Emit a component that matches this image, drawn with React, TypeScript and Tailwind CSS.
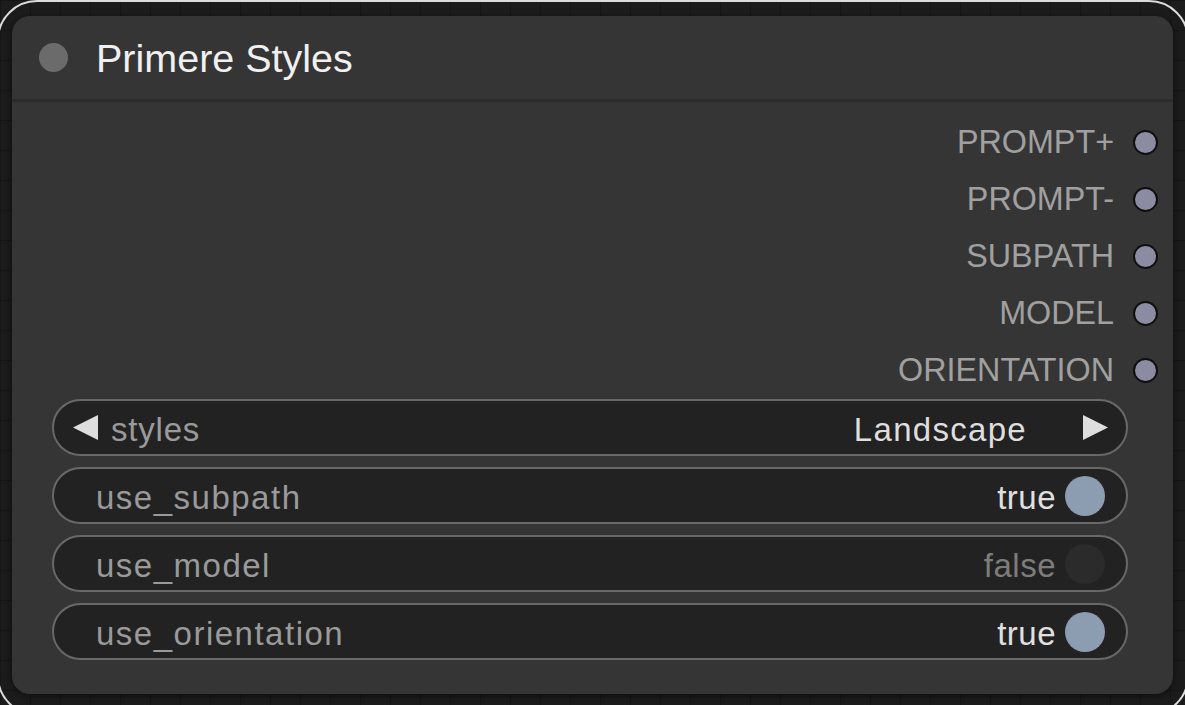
import React from 'react';

const outputs = ['PROMPT+', 'PROMPT-', 'SUBPATH', 'MODEL', 'ORIENTATION'];

const toggles = [
  { name: 'use_subpath', value: true },
  { name: 'use_model', value: false },
  { name: 'use_orientation', value: true },
];

const font = { fontFamily: '"Liberation Sans", Arial, sans-serif' };

const Pill: React.FC<{ children: React.ReactNode }> = ({ children }) => (
  <div className="h-[57px] flex items-center rounded-full border-2 border-[#686868] bg-[#222222]">
    {children}
  </div>
);

export default function App() {
  return (
    <div
      className="relative w-[1185px] h-[705px] overflow-hidden bg-[#1c1c1c] bg-[linear-gradient(#161616_1px,transparent_1px),linear-gradient(90deg,#161616_1px,transparent_1px)] bg-[size:30px_30px] pt-[16px] pl-[12px]"
      style={font}
    >
      {/* selection outline */}
      <div className="pointer-events-none absolute left-[-3px] top-0 w-[1192px] h-[716px] rounded-[40px] border-2 border-[#dcdcdc]" />

      <div className="w-[1161px] h-[678px] rounded-[18px] bg-[#353535] flex flex-col overflow-hidden shadow-[0_2px_8px_rgba(0,0,0,0.5)]">
        <div className="h-[86px] shrink-0 flex items-center border-b-[3px] border-[#2b2b2b]">
          <div className="ml-[27px] w-[29px] h-[29px] rounded-full bg-[#6b6b6b]" />
          <span className="ml-[28px] mt-[2px] text-[39.5px] leading-none text-[#f0f0f0]">Primere Styles</span>
        </div>

        <div className="pt-[12px] flex flex-col">
          {outputs.map((o) => (
            <div key={o} className="h-[57px] flex items-center justify-end pr-[15px] gap-[19px]">
              <span className="text-[32.3px] leading-none text-[#a0a0a0]">{o}</span>
              <div className="w-[25px] h-[25px] rounded-full bg-[#8b8ba2] border-[2.5px] border-[#0f0f0f]" />
            </div>
          ))}
        </div>

        <div className="ml-[40px] mr-[45px] flex flex-col gap-[11px]">
          <Pill>
            <svg width="27" height="27" viewBox="0 0 27 27" className="ml-[18px]">
              <polygon points="26,1 26,26 1,13.5" fill="#dedede" />
            </svg>
            <span className="ml-[12px] mt-[3px] text-[33px] leading-none tracking-[0.8px] text-[#9a9a9a]">styles</span>
            <span className="ml-auto mt-[3px] text-[33px] leading-none tracking-[1.3px] text-[#dedede]">Landscape</span>
            <svg width="27" height="27" viewBox="0 0 27 27" className="ml-[55px] mr-[17px]">
              <polygon points="1,1 1,26 26,13.5" fill="#dedede" />
            </svg>
          </Pill>
          {toggles.map((t) => (
            <Pill key={t.name}>
              <span className="ml-[42px] mt-[3px] text-[33px] leading-none tracking-[1.5px] text-[#9a9a9a]">{t.name}</span>
              <span
                className={`ml-auto mt-[3px] text-[33px] leading-none tracking-[0.5px] ${
                  t.value ? 'text-[#e0e0e0]' : 'text-[#7c7c7c]'
                }`}
              >
                {t.value ? 'true' : 'false'}
              </span>
              <div
                className={`ml-[9px] mr-[21px] w-[40px] h-[40px] rounded-full ${
                  t.value ? 'bg-[#8c9cb1]' : 'bg-[#2b2b2b]'
                }`}
              />
            </Pill>
          ))}
        </div>
      </div>
    </div>
  );
}
